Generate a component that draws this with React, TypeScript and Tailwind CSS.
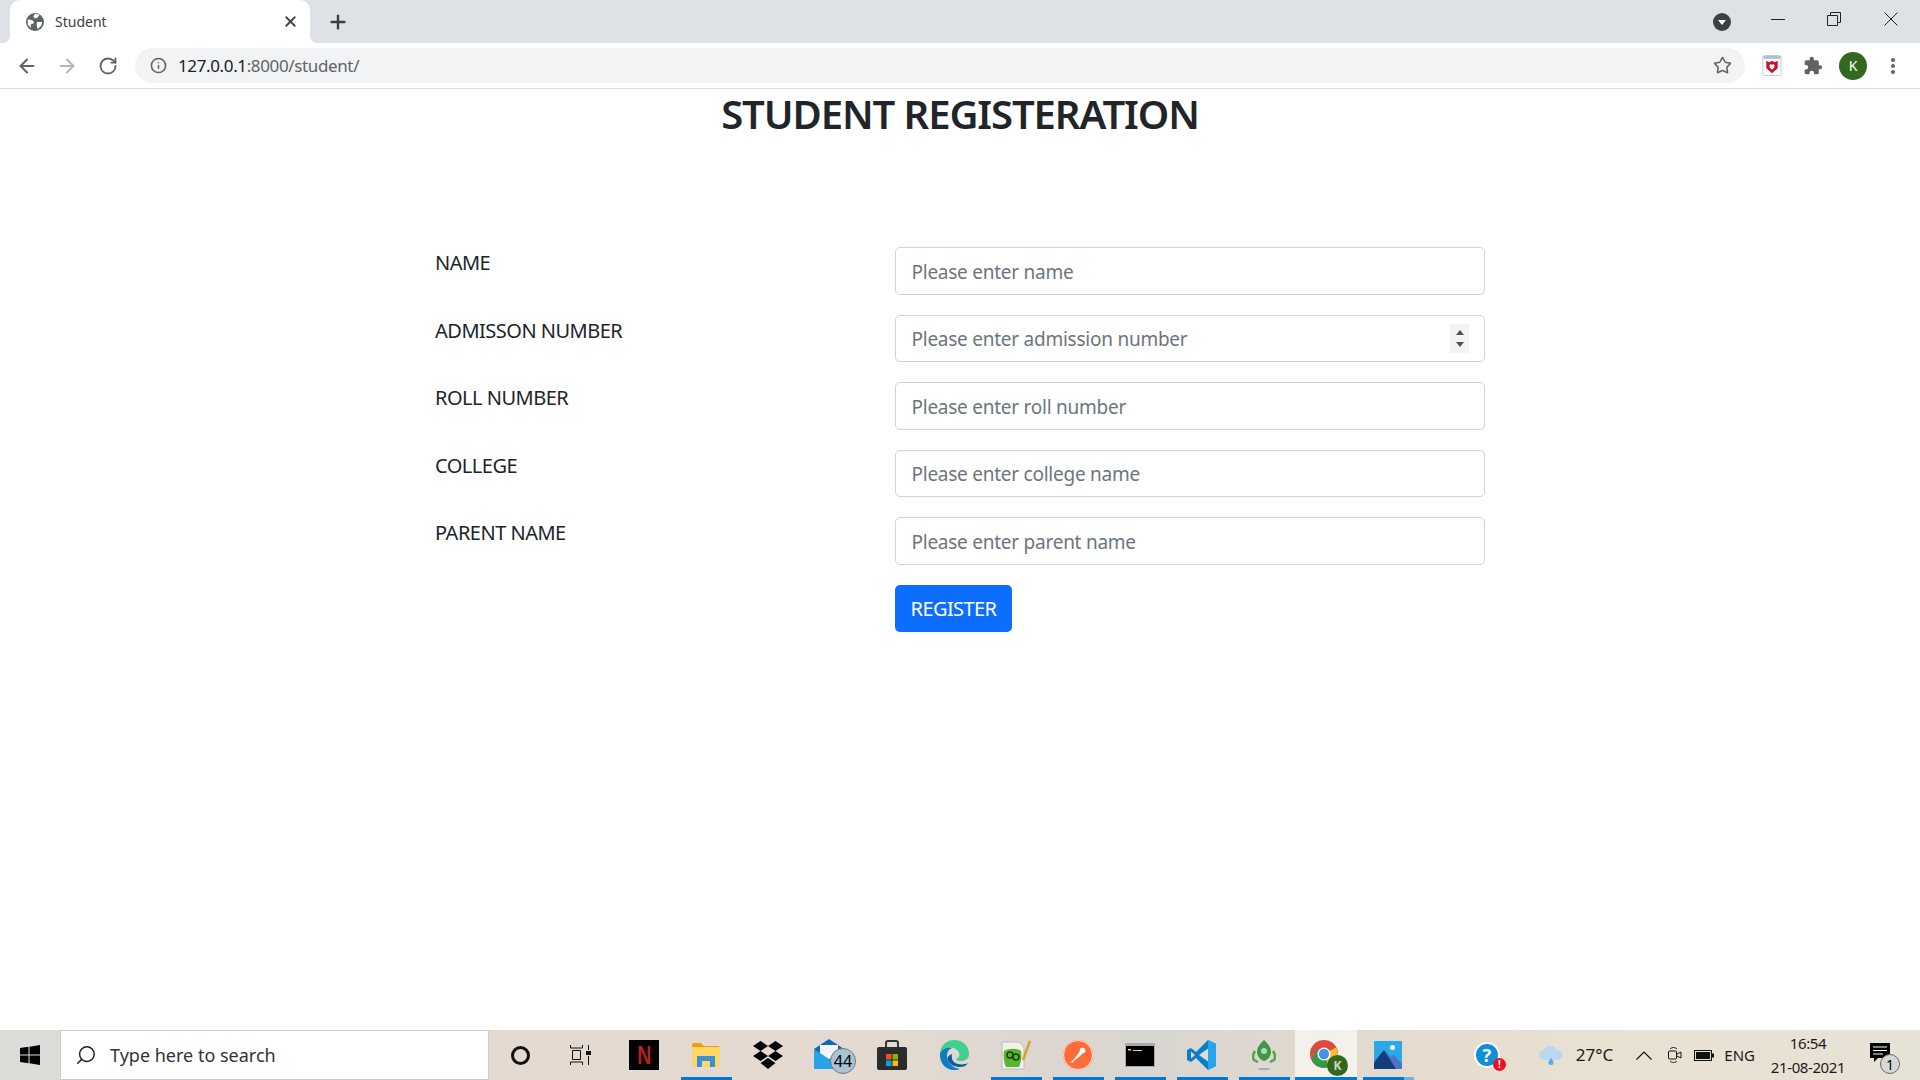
import { ArrowLeft, ArrowRight, Info, Plus, RotateCw, Search, Star, X } from "lucide-react";

const fields = [
  { label: "NAME", placeholder: "Please enter name" },
  { label: "ADMISSON NUMBER", placeholder: "Please enter admission number", spinner: true },
  { label: "ROLL NUMBER", placeholder: "Please enter roll number" },
  { label: "COLLEGE", placeholder: "Please enter college name" },
  { label: "PARENT NAME", placeholder: "Please enter parent name" },
];

function GlobeIcon() {
  return (
    <svg viewBox="0 0 20 20" className="h-[18px] w-[18px]">
      <circle cx="10" cy="10" r="10" fill="#5f6368" />
      <path d="M2 7l5 1 2 2-1 2-2 0-1 2 1 3-4-4zM10 1l5 1-2 3-3 1-2-2zM12 10l6 0-1 4-4 4-1-4z" fill="#fff" />
    </svg>
  );
}

function ChromeBar() {
  return (
    <div className="flex h-[43px] items-stretch bg-[#dee1e6]">
      <div className="relative ml-[10px] flex w-[300px] items-center rounded-t-[10px] bg-white pl-[16px] pr-[11px]">
        <span className="absolute bottom-0 left-[-8px] h-2 w-2 bg-[radial-gradient(circle_at_0_0,#dee1e6_8px,#fff_8.5px)]" />
        <span className="absolute bottom-0 right-[-8px] h-2 w-2 bg-[radial-gradient(circle_at_100%_0,#dee1e6_8px,#fff_8.5px)]" />
        <GlobeIcon />
        <span className="ml-[11px] flex-1 text-[14px] text-[#3c4043]">Student</span>
        <X size={17} strokeWidth={2.5} className="text-[#3c4043]" />
      </div>
      <div className="ml-[17px] flex items-center">
        <Plus size={22} strokeWidth={2.6} className="text-[#3c4043]" />
      </div>
      <div className="flex-1" />
      <div className="flex items-center">
        <svg viewBox="0 0 18 18" className="mr-[40px] h-[18px] w-[18px]">
          <circle cx="9" cy="9" r="9" fill="#3c4043" />
          <path d="M5 7h8l-4 5z" fill="#fff" />
        </svg>
        <svg viewBox="0 0 14 2" className="mr-[42px] mt-[-4px] h-[2px] w-[14px]">
          <rect width="14" height="1" fill="#222" />
        </svg>
        <svg viewBox="0 0 14 14" className="mr-[43px] mt-[-5px] h-[14px] w-[14px]" fill="none" stroke="#222">
          <path d="M.5 3.5h10v10H.5zM3.5 3.5v-3h10v10h-3" />
        </svg>
        <svg viewBox="0 0 14 14" className="mr-[22px] mt-[-5px] h-[14px] w-[14px]" fill="none" stroke="#222">
          <path d="M.5.5l13 13M13.5.5l-13 13" />
        </svg>
      </div>
    </div>
  );
}

function Toolbar() {
  return (
    <div className="flex h-[46px] items-start border-b border-[#dadce0] bg-white pt-[5px]">
      <div className="flex h-[35px] w-[135px] items-center text-[#5f6368]">
        <ArrowLeft size={22} strokeWidth={2.2} className="ml-[16px]" />
        <ArrowRight size={22} strokeWidth={2.2} className="ml-[18px] text-[#b4b6b9]" />
        <RotateCw size={20} strokeWidth={2.2} className="ml-[20px]" />
      </div>
      <div className="flex h-[35px] w-[1610px] items-center rounded-full bg-[#f1f3f4] pl-[15px] pr-[13px]">
        <Info size={17} strokeWidth={2.2} className="text-[#5f6368]" />
        <span className="ml-[11px] flex-1 text-[17px] tracking-[-0.37px] text-[#5f6368]">
          <span className="text-[#202124]">127.0.0.1</span>:8000/student/
        </span>
        <Star size={19} strokeWidth={2} className="text-[#5f6368]" />
      </div>
      <div className="flex h-[35px] items-center">
        <svg viewBox="0 0 20 22" className="ml-[17px] h-[21px] w-[20px]">
          <rect x=".5" y=".5" width="19" height="21" rx="1.5" fill="#fff" stroke="#c5c8cc" />
          <rect x="1" y="1" width="18" height="3" fill="#a9c1d6" />
          <path d="M4 6l3 1.500L10 6l3 1.500L16 6v8l-6 5-6-5z" fill="#c8102e" />
          <path d="M7.500 10h5v3l-2.500 2.500L7.500 13z" fill="#fff" />
        </svg>
        <svg viewBox="0 0 24 24" className="ml-[21px] h-[20px] w-[20px]" fill="#5f6368">
          <path d="M20.5 11H19V7a2 2 0 0 0-2-2h-4V3.5a2.5 2.5 0 0 0-5 0V5H4a2 2 0 0 0-2 2v3.8h1.5a2.7 2.7 0 0 1 0 5.4H2V20a2 2 0 0 0 2 2h3.800v-1.500a2.700 2.700 0 0 1 5.400 0V22H17a2 2 0 0 0 2-2v-4h1.500a2.500 2.500 0 0 0 0-5z" />
        </svg>
        <span className="ml-[16px] flex h-7 w-7 items-center justify-center rounded-full bg-[#33691e] text-[14px] text-white">K</span>
        <svg viewBox="0 0 4 16" className="ml-[24px] h-4 w-1" fill="#5f6368">
          <circle cx="2" cy="2" r="2" />
          <circle cx="2" cy="8" r="2" />
          <circle cx="2" cy="14" r="2" />
        </svg>
      </div>
    </div>
  );
}

function RegisterForm() {
  return (
    <main className="flex-1 bg-white text-[#212529]">
      <h1 className="pt-[1px] text-center text-[40px] font-semibold leading-[48px] tracking-[-1.1px]">STUDENT REGISTERATION</h1>
      <form className="mx-auto mt-[109px] w-[1050px]">
        {fields.map((field) => (
          <div key={field.label} className="mb-[20px] grid grid-cols-[460px_590px]">
            <label className="pt-[1px] text-[20px] leading-[30px] tracking-[-0.5px]">{field.label}</label>
            <div className="relative">
              <input
                type="text"
                placeholder={field.placeholder}
                className="h-[47.5px] w-full rounded-[5px] border border-[#ced4da] bg-white px-[15.5px] pt-[1.5px] text-[19px] tracking-[-0.25px] placeholder:text-[#6c757d] outline-none"
              />
              {field.spinner && (
                <span className="absolute right-[16px] top-[9px] flex h-[29px] w-[19px] flex-col items-center justify-center gap-[7px] bg-[#f3f3f3]">
                  <span className="h-0 w-0 border-x-[4.5px] border-b-[5px] border-x-transparent border-b-[#505050]" />
                  <span className="h-0 w-0 border-x-[4.5px] border-t-[5px] border-x-transparent border-t-[#505050]" />
                </span>
              )}
            </div>
          </div>
        ))}
        <div className="pl-[460px]">
          <button type="button" className="h-[47.5px] w-[117px] rounded-[5px] bg-[#0d6efd] pt-[1px] text-[20px] tracking-[-0.6px] text-white">
            REGISTER
          </button>
        </div>
      </form>
    </main>
  );
}

function TaskSlot({ children, on, active, extra }: { children: React.ReactNode; on?: boolean; active?: boolean; extra?: boolean }) {
  return (
    <div className={`relative flex h-[50px] w-[62px] items-center justify-center ${active ? "bg-[#f4f0ea]" : ""}`}>
      {children}
      {on && (
        <span className={`absolute bottom-0 flex h-[3px] ${active ? "inset-x-0" : "inset-x-[5.5px]"} bg-[#0078d4]`}>
          {extra && <span className="ml-auto h-full w-[10px] bg-[#6fb1e6]" />}
        </span>
      )}
    </div>
  );
}

function Taskbar() {
  return (
    <footer className="flex h-[50px] items-stretch bg-[linear-gradient(90deg,#dcdcd9_0%,#e3d9d1_15%,#e4dad1_45%,#d9d5d0_60%,#e6dccf_75%,#e9e2d3_85%,#e7e2d6_100%)] text-[#1a1a1a]">
      <div className="flex w-[60px] items-center justify-center">
        <svg viewBox="0 0 20 20" className="h-5 w-5" fill="#000">
          <path d="M0 3l8.500-1.200V9.500H0zM9.500 1.700L20 0v9.500H9.500zM0 10.500h8.500v7.700L0 17zM9.500 10.500H20V20l-10.500-1.700z" />
        </svg>
      </div>
      <div className="flex w-[429px] items-center border border-[#cccccc] bg-white pl-[14px]">
        <Search size={22} strokeWidth={1.6} className="-scale-x-100 text-[#1a1a1a]" />
        <span className="ml-[13px] text-[18px] text-[#333]">Type here to search</span>
      </div>
      <TaskSlot>
        <span className="h-[19px] w-[19px] rounded-full border-[3px] border-[#111]" />
      </TaskSlot>
      <TaskSlot>
        <svg viewBox="0 0 22 20" className="mr-[3px] h-5 w-[22px]" fill="none" stroke="#111">
          <path d="M.5 0v3h12V0M.5 20v-3h12v3M2.500 5.500h8v9h-8zM18.500 0v5M18.500 11v9" />
          <rect x="16.500" y="6.500" width="4" height="3" fill="#111" />
        </svg>
      </TaskSlot>
      <TaskSlot>
        <span className="flex h-[30px] w-[30px] items-center justify-center bg-black font-['Liberation_Sans',sans-serif] text-[26px] font-bold text-[#b81d24]">
          <span className="inline-block scale-x-75">N</span>
        </span>
      </TaskSlot>
      <TaskSlot on>
        <svg viewBox="0 0 28 24" className="h-6 w-7">
          <path d="M0 2a2 2 0 0 1 2-2h7l3 3h14a2 2 0 0 1 2 2v3H0z" fill="#e5a50a" />
          <path d="M0 4h28v18a2 2 0 0 1-2 2H2a2 2 0 0 1-2-2z" fill="#ffd767" />
          <path d="M5 24V13h18v11h-5v-6h-8v6z" fill="#3c8fd9" />
        </svg>
      </TaskSlot>
      <TaskSlot>
        <svg viewBox="0 0 30 28" className="h-7 w-[30px]" fill="#000">
          <path d="M7.500 0L15 5 7.500 10 0 5zM22.500 0L30 5l-7.500 5L15 5zM7.500 10L15 15l-7.500 5L0 15zM22.500 10L30 15l-7.500 5L15 15zM15 17l7.500 5L15 28l-7.500-6z" />
        </svg>
      </TaskSlot>
      <TaskSlot>
        <div className="relative mt-[-2px] h-[30px] w-[32px]">
          <svg viewBox="0 0 30 30" className="h-[30px] w-[30px]">
            <path d="M15 0L30 10v18H0V10z" fill="#0f6cbd" />
            <path d="M6 6h18v14H6z" fill="#f3f6f8" />
            <path d="M0 10l15 10 15-10v20H0z" fill="#27a4e8" />
          </svg>
          <span className="absolute bottom-[-5px] right-[-10px] flex h-[26px] w-[26px] items-center justify-center rounded-full border border-[#777] bg-[#a8c4d4] text-[16px] leading-none text-black">44</span>
        </div>
      </TaskSlot>
      <TaskSlot>
        <svg viewBox="0 0 30 30" className="h-[30px] w-[30px]">
          <path d="M9 8V3a2 2 0 0 1 2-2h8a2 2 0 0 1 2 2v5" fill="none" stroke="#333" strokeWidth="2" />
          <rect y="7" width="30" height="23" rx="2" fill="#2b2b2b" />
          <rect x="9" y="14" width="5.500" height="5.500" fill="#f25022" />
          <rect x="15.500" y="14" width="5.500" height="5.500" fill="#7fba00" />
          <rect x="9" y="20.500" width="5.500" height="5.500" fill="#00a4ef" />
          <rect x="15.500" y="20.500" width="5.500" height="5.500" fill="#ffb900" />
        </svg>
      </TaskSlot>
      <TaskSlot>
        <svg viewBox="0 0 30 30" className="h-[30px] w-[30px]">
          <path d="M1 13C2 5 8 0 15 0c9 0 15 6 15 14 0 5-4 7-8 7-3 0-5-1-5-2 3-1 4-3 3-6-1-4-6-6-11-5-4 1-7 3-8 5z" fill="#3fcf8e" />
          <path d="M1 13C4 8 9 7 13 8c-5 2-6 7-4 12 2 5 6 8 12 9-2 1-4 1-6 1C6 30 0 22 1 13z" fill="#0f7dc2" />
          <path d="M9 20c2 5 7 7 12 7 3 0 6-1 8-4-2 1-6 2-10 1-5-1-7-5-6-10-3 1-5 3-4 6z" fill="#0c59a4" />
        </svg>
      </TaskSlot>
      <TaskSlot on>
        <svg viewBox="0 0 30 30" className="h-[30px] w-[30px]">
          <path d="M1 2h17l5 5v22H1z" fill="#f2f2ea" stroke="#bbb" />
          <path d="M3 11c5-3 14-3 17 0 1 5 0 12-2 16H5c-2-4-3-11-2-16z" fill="#55b62f" />
          <circle cx="9" cy="15" r="3" fill="none" stroke="#1c3d12" strokeWidth="1.500" />
          <circle cx="15" cy="17" r="3" fill="none" stroke="#1c3d12" strokeWidth="1.500" />
          <path d="M29 1L22 20" stroke="#d9a032" strokeWidth="2.500" />
        </svg>
      </TaskSlot>
      <TaskSlot on>
        <svg viewBox="0 0 30 30" className="h-[30px] w-[30px]">
          <circle cx="15" cy="15" r="15" fill="#ff6c37" />
          <circle cx="15" cy="15" r="14.500" fill="none" stroke="#ffe2d6" />
          <path d="M9 22l5-7 4-5 3 2-5 5z" fill="#fff" />
          <circle cx="19.500" cy="10.500" r="2.800" fill="#fff" />
          <path d="M7 23l3-3 1 2z" fill="#fff" />
        </svg>
      </TaskSlot>
      <TaskSlot on>
        <svg viewBox="0 0 30 24" className="h-6 w-[30px]">
          <rect width="30" height="24" fill="#a9a9a9" />
          <rect x="1" y="3" width="28" height="20" fill="#000" />
          <rect x="3" y="6" width="3" height="1.500" fill="#ccc" />
          <rect x="8" y="7" width="9" height="1" fill="#ccc" />
        </svg>
      </TaskSlot>
      <TaskSlot on>
        <svg viewBox="0 0 30 30" className="h-[30px] w-[30px]">
          <path d="M21 0l8 4v22l-8 4L9 18l-5 4-4-2v-10l4-2 5 4z" fill="#0a7ec9" />
          <path d="M21 0l8 4v22l-8 4z" fill="#28a4ec" />
          <path d="M21 8.500v13L12 15z" fill="#e4dad1" />
          <path d="M4 11.500L8 15l-4 3.500z" fill="#e4dad1" />
        </svg>
      </TaskSlot>
      <TaskSlot on>
        <svg viewBox="0 0 24 30" className="h-[30px] w-6">
          <path d="M12 0c4 4 7 7 7 12 0 4-3 8-7 9-4-1-7-5-7-9 0-5 3-8 7-12z" fill="#3c9a46" />
          <circle cx="12" cy="11" r="3" fill="#a8dcb0" />
          <path d="M3 11c-2 3-3 6-1 9l4 2M21 11c2 3 3 6 1 9l-4 2" fill="none" stroke="#5aa24a" strokeWidth="2.500" />
          <ellipse cx="12" cy="29" rx="6" ry="1" fill="#aaa" />
        </svg>
      </TaskSlot>
      <TaskSlot on active>
        <div className="relative h-[30px] w-[32px]">
          <svg viewBox="0 0 30 30" className="h-[28px] w-[28px]">
            <circle cx="15" cy="15" r="15" fill="#dd4b3e" />
            <path d="M15 15L28 8a15 15 0 0 1-8 21z" fill="#fbc02d" />
            <path d="M15 15l5 14A15 15 0 0 1 2 22L7 10z" fill="#2e9d49" />
            <circle cx="15" cy="15" r="7" fill="#fff" />
            <circle cx="15" cy="15" r="5.500" fill="#4a8fe8" />
          </svg>
          <span className="absolute bottom-[-6px] right-[-6px] flex h-[21px] w-[21px] items-center justify-center rounded-full bg-[#33691e] text-[12px] font-bold text-[#cfd8c0]">K</span>
        </div>
      </TaskSlot>
      <TaskSlot on extra>
        <svg viewBox="0 0 28 28" className="h-7 w-7">
          <rect width="28" height="28" rx="1" fill="#29a8ea" />
          <circle cx="18.500" cy="6.500" r="2.500" fill="#fff" />
          <path d="M0 20l10-11 7 7 3-2 8 9v5H0z" fill="#4c74c4" />
          <path d="M0 22l10-13 12 19H0z" fill="#123f7c" />
        </svg>
      </TaskSlot>
      <div className="flex-1" />
      <div className="flex items-center">
        <div className="relative mr-[38px] h-[26px] w-[26px]">
          <span className="flex h-[26px] w-[26px] items-center justify-center rounded-full border-2 border-white bg-[#0f8fd6] text-[18px] font-bold text-white">?</span>
          <span className="absolute bottom-[-3px] right-[-6px] flex h-[13px] w-[13px] items-center justify-center rounded-full bg-[#e81123] text-[10px] font-bold text-white">!</span>
        </div>
        <svg viewBox="0 0 26 20" className="mr-[12px] h-5 w-[26px]">
          <path d="M6 15a5 5 0 0 1 0-10c1-3 4-5 7-4 3 0 5 2 6 4a5 5 0 0 1 1 10z" fill="#b9d8f0" />
          <path d="M13 13c1.500 2 2.500 3 2.500 4.500a2.500 2.500 0 0 1-5 0c0-1.500 1-2.500 2.500-4.500z" fill="#5da9e0" />
        </svg>
        <span className="mr-[23px] text-[17px]">27°C</span>
        <svg viewBox="0 0 16 9" className="mr-[16px] h-[9px] w-4" fill="none" stroke="#111" strokeWidth="1.200">
          <path d="M.5 8.500L8 1l7.500 7.500" />
        </svg>
        <svg viewBox="0 0 14 18" className="mr-[12px] h-[18px] w-[14px]" fill="none" stroke="#111">
          <rect x=".5" y="5" width="8" height="8" rx="1" />
          <path d="M9 8l4-2v6l-4-2M2 3c2-2 5-2 7 0M2 15c2 2 5 2 7 0" />
        </svg>
        <svg viewBox="0 0 20 11" className="mr-[10px] h-[11px] w-5">
          <rect x=".5" y=".5" width="17" height="10" fill="none" stroke="#111" />
          <rect x="2" y="2" width="14" height="7" fill="#111" />
          <rect x="18" y="3.500" width="2" height="4" fill="#111" />
        </svg>
        <span className="mr-[15px] text-[15px]">ENG</span>
        <div className="mr-[24px] flex w-[76px] flex-col items-center whitespace-nowrap text-[15px] leading-[24px] tracking-[-0.4px]">
          <span>16:54</span>
          <span>21-08-2021</span>
        </div>
        <div className="relative mr-[30px] h-[24px] w-[20px]">
          <svg viewBox="0 0 20 20" className="h-5 w-5">
            <path d="M0 0h20v15H8l-4 4v-4H0z" fill="#000" />
            <path d="M3 4h14M3 7.500h14M3 11h10" stroke="#fff" />
          </svg>
          <span className="absolute bottom-[-7px] right-[-10px] flex h-[20px] w-[20px] items-center justify-center rounded-full border border-[#666] bg-[#d8d8d8] text-[14px] text-black">1</span>
        </div>
      </div>
    </footer>
  );
}

export default function App() {
  return (
    <div className="flex h-[1080px] w-[1920px] flex-col overflow-hidden bg-white font-['Noto_Sans','Open_Sans',sans-serif]">
      <ChromeBar />
      <Toolbar />
      <RegisterForm />
      <Taskbar />
    </div>
  );
}
